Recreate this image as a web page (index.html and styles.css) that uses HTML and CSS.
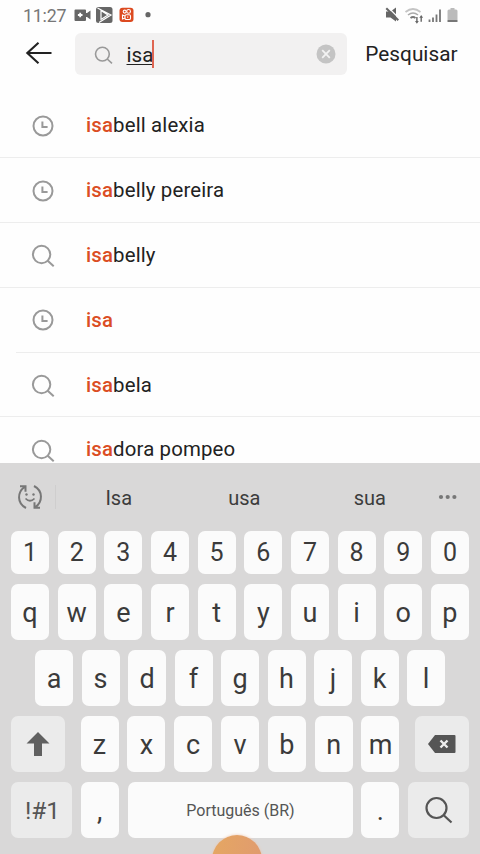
FILE: index.html
```html
<!DOCTYPE html>
<html lang="pt-BR">
<head>
<meta charset="utf-8">
<title>Pesquisar</title>
<link rel="stylesheet" href="styles.css">
</head>
<body>
<svg class="defs" width="0" height="0">
  <symbol id="clock" viewBox="0 0 24 24"><g fill="none" stroke="#999" stroke-width="2"><circle cx="12" cy="12" r="9.5"/><path d="M11.400 7.500v5.400h5.200"/></g></symbol>
  <symbol id="search" viewBox="0 0 24 24"><g fill="none" stroke="#999" stroke-width="2"><circle cx="10.600" cy="11.500" r="8.700"/><path d="M16.700 17.700l6 5.600"/></g></symbol>
</svg>
<div class="screen">
  <header class="status">
    <span class="time">11:27</span>
    <svg class="left-icons" width="84" height="24" viewBox="70 3 84 24">
      <path fill="#666" d="M75.500 9.500h9.500q1 0 1 1v2.500h1l3.500-2.500v9l-3.500-2.500h-1v3q0 1-1 1h-9.500q-1 0-1-1v-9.500q0-1 1-1z"/><path stroke="#fff" stroke-width="1.800" d="M80.200 12.700v4.600M77.900 15h4.600"/>
      <rect x="96" y="7" width="16.500" height="16" rx="2.500" fill="#666"/><path d="M97.500 8l13.500 7-12 7.500M101 10.500v9l7-4.500z" fill="none" stroke="#fff" stroke-width="1.200"/>
      <rect x="119.500" y="7.800" width="14" height="14.200" rx="3" fill="#dc4a20"/><g fill="none" stroke="#fff" stroke-width="1.100"><circle cx="124.700" cy="11.600" r="1.500"/><circle cx="128.600" cy="11.400" r="1.900"/><rect x="125" y="14.800" width="5.500" height="4.700" rx="1.300"/><path d="M125 16l-2.500-1v4l2.500-1M127.700 16.500v1.300"/></g>
      <circle cx="148" cy="14.700" r="2.600" fill="#666"/>
    </svg>
    <svg class="right-icons" width="80" height="24" viewBox="382 3 80 24">
      <path fill="#666" d="M386 11.500h4.500l5.500-4v14l-5.500-4H386z"/><path stroke="#fefefe" stroke-width="1.300" d="M388 7.300l11.500 11.500"/><path stroke="#666" stroke-width="2" d="M386.300 8.200l12 12"/>
      <g fill="none"><path stroke="#c4c4c4" stroke-width="1.700" d="M405.500 12q7.500-6 15 0"/><path stroke="#aaa" stroke-width="1.600" d="M408 15q5-4 10 0"/><path stroke="#777" stroke-width="1.800" d="M410.500 18q2.500-2 5 0"/></g>
      <path fill="#666" d="M416.200 17h1.400v4h1.200l-1.900 2.800-1.900-2.800h1.200zM421.200 15l1.900 2.800h-1.200v4h-1.400v-4h-1.200z"/>
      <path stroke="#777" stroke-width="1.800" d="M429.500 19.500v2.500M433 17.500v4.500M436.500 14.500v7.500M440 9.500v12.500"/>
      <path fill="#bbb" d="M449 9.500h1.500V8h4v1.500h1.500q1.500 0 1.500 1.500V20h-10v-9q0-1.500 1.500-1.500z"/><path fill="#777" d="M447.500 20h10v2h-10z"/>
    </svg>
  </header>
  <div class="toolbar">
    <svg class="back" width="28" height="26" viewBox="0 0 28 26"><path d="M13.500 2.700L2.300 13l11.200 10.300M2.500 13h24" fill="none" stroke="#222" stroke-width="2.100"/></svg>
    <div class="field">
      <svg width="19" height="19" viewBox="0 0 24 24"><use href="#search"/></svg>
      <span class="query">isa</span><span class="caret"></span>
      <svg class="clear" width="20" height="20" viewBox="0 0 20 20"><circle cx="10" cy="10" r="9.500" fill="#c4c4c4"/><path d="M6.200 6.200l7.600 7.600m0-7.600l-7.600 7.600" stroke="#f3f3f3" stroke-width="1.800"/></svg>
    </div>
    <span class="submit">Pesquisar</span>
  </div>
  <main class="list">
    <div class="row"><svg class="ic"><use href="#clock"/></svg><p><b>isa</b>bell alexia</p></div>
    <div class="row"><svg class="ic"><use href="#clock"/></svg><p><b>isa</b>belly pereira</p></div>
    <div class="row"><svg class="ic"><use href="#search"/></svg><p><b>isa</b>belly</p></div>
    <div class="row inset"><svg class="ic"><use href="#clock"/></svg><p><b>isa</b></p></div>
    <div class="row"><svg class="ic"><use href="#search"/></svg><p><b>isa</b>bela</p></div>
    <div class="row"><svg class="ic"><use href="#search"/></svg><p><b>isa</b>dora pompeo</p></div>
  </main>
  <section class="keyboard">
    <div class="suggest">
      <svg class="emoji" width="26" height="28" viewBox="0 0 26 28"><g fill="none" stroke="#777" stroke-width="2"><path d="M9 25C-.5 20 .5 9 7.500 4M3 3.300h5.500v5.500M17 3c9.500 5 8.500 16 1.500 21M23 24.700h-5.500v-5.500"/><path stroke-width="1.700" d="M8.500 15.500q4.500 4.500 9 0"/></g><circle cx="9.500" cy="11.500" r="1.200" fill="#777"/><circle cx="16.500" cy="11.500" r="1.200" fill="#777"/></svg>
      <i class="sep"></i><span>Isa</span><span>usa</span><span>sua</span>
      <svg class="more" width="20" height="6" viewBox="0 0 20 6" fill="#777"><circle cx="3" cy="3" r="2.100"/><circle cx="9.700" cy="3" r="2.100"/><circle cx="16.400" cy="3" r="2.100"/></svg>
    </div>
    <div class="keys digits"><kbd>1</kbd><kbd>2</kbd><kbd>3</kbd><kbd>4</kbd><kbd>5</kbd><kbd>6</kbd><kbd>7</kbd><kbd>8</kbd><kbd>9</kbd><kbd>0</kbd></div>
    <div class="keys"><kbd>q</kbd><kbd>w</kbd><kbd>e</kbd><kbd>r</kbd><kbd>t</kbd><kbd>y</kbd><kbd>u</kbd><kbd>i</kbd><kbd>o</kbd><kbd>p</kbd></div>
    <div class="keys home"><kbd>a</kbd><kbd>s</kbd><kbd>d</kbd><kbd>f</kbd><kbd>g</kbd><kbd>h</kbd><kbd>j</kbd><kbd>k</kbd><kbd>l</kbd></div>
    <div class="keys third">
      <kbd class="fn"><svg width="24" height="24" viewBox="0 0 24 24"><path d="M12 0l11.500 11.500H16V24H8V11.500H.5z" fill="#606060"/></svg></kbd>
      <div class="letters"><kbd>z</kbd><kbd>x</kbd><kbd>c</kbd><kbd>v</kbd><kbd>b</kbd><kbd>n</kbd><kbd>m</kbd></div>
      <kbd class="fn"><svg width="28" height="18" viewBox="0 0 28 18"><path d="M0 9l7-9h19.500q1 0 1 1v16q0 1-1 1H7z" fill="#555"/><path d="M12.500 5.500l7 7m0-7l-7 7" stroke="#eee" stroke-width="2.400"/></svg></kbd>
    </div>
    <div class="keys bottom">
      <kbd class="fn sym">!#1</kbd><kbd>,</kbd><kbd class="space">Português (BR)</kbd><kbd>.</kbd>
      <kbd class="fn"><svg width="28" height="28" viewBox="0 0 28 28"><g fill="none" stroke="#555" stroke-width="2.200"><circle cx="11.500" cy="12" r="10"/><path d="M18.500 19l8 7.500"/></g></svg></kbd>
    </div>
    <div class="bubble"></div>
  </section>
</div>
</body>
</html>
```
FILE: styles.css
```css
* { box-sizing: border-box; }
body { margin: 0; background: #fefefe; color: #222; font-family: Roboto, sans-serif; }
svg { display: block; flex: none; }
.defs { position: absolute; }
.screen { width: 480px; height: 854px; overflow: hidden; display: flex; flex-direction: column; }
.status { height: 30px; padding: 0 18px 0 23px; display: flex; align-items: center; }
.time { width: 47px; font-size: 17.8px; color: #777; letter-spacing: -.2px; }
.right-icons { margin-left: auto; }
.toolbar { height: 63.5px; padding: 3px 22.5px 0 24.5px; display: flex; align-items: flex-start; }
.back { margin-top: 7px; }
.field { width: 272px; height: 42px; margin-left: 22.5px; padding: 0 11px 0 18.5px; border-radius: 6px; background: #f2f1f1; display: flex; align-items: center; }
.query { margin: 2px 0 0 14px; font-size: 20.6px; line-height: 24px; text-decoration: underline; text-decoration-thickness: 1px; text-underline-offset: 2px; }
.caret { width: 2px; height: 28px; margin-left: -1px; background: #df6652; }
.clear { margin-left: auto; }
.submit { margin-left: auto; font-size: 20.8px; line-height: 43px; }
.list { height: 369.5px; overflow: hidden; }
.row { height: 64.8px; padding-left: 31px; display: flex; align-items: center; background: linear-gradient(#ededed, #ededed) 0 100% / 100% 1px no-repeat; }
.row.inset { background-position: 16px 100%; }
.ic { width: 24px; height: 24px; }
.row p { margin: 0 0 1px 31px; font-size: 20.4px; line-height: 24px; letter-spacing: .14px; }
.row b { color: #db4d23; font-weight: 500; }
.keyboard { position: relative; height: 391px; padding: 0 11px; background: #d9d8d8; }
.suggest { height: 67.5px; display: flex; align-items: center; }
.emoji { margin-left: 6px; }
.sep { width: 1px; height: 24px; margin-left: 12px; background: #cfcece; }
.suggest span { width: 125.5px; padding-top: 2px; text-align: center; font-size: 20px; line-height: 24px; color: #3c3c3c; }
.more { margin-left: 5px; }
.keys { display: grid; grid-template-columns: repeat(10, 38px); justify-content: space-between; height: 56px; margin-bottom: 10px; }
.keys.digits { height: 43.5px; }
kbd { display: flex; align-items: center; justify-content: center; padding-top: 2px; border-radius: 7px; background: #fbfbfb; color: #3b3b3b; font: 27px/32px Roboto, sans-serif; }
.digits kbd { font-size: 25px; padding-top: 1px; }
.keys.home { grid-template-columns: repeat(9, 38px); padding: 0 24px; }
.keys.third { grid-template-columns: 54px 319px 54px; }
.letters { display: grid; grid-template-columns: repeat(7, 38px); justify-content: space-between; }
.keys.bottom { grid-template-columns: 61px 38px 225px 38px 61px; }
kbd.fn { background: #ebebeb; color: #555; padding-top: 0; }
kbd.sym { font-size: 24.5px; padding: 1px 0 0 2px; }
kbd.space { font-size: 16px; color: #555; padding-left: 1px; }
.bubble { position: absolute; left: 212px; top: 371.500px; width: 50px; height: 50px; border-radius: 50%; background: linear-gradient(100deg, #e5a762, #e09a70); box-shadow: 0 0 3px #efc5ae; }
```
